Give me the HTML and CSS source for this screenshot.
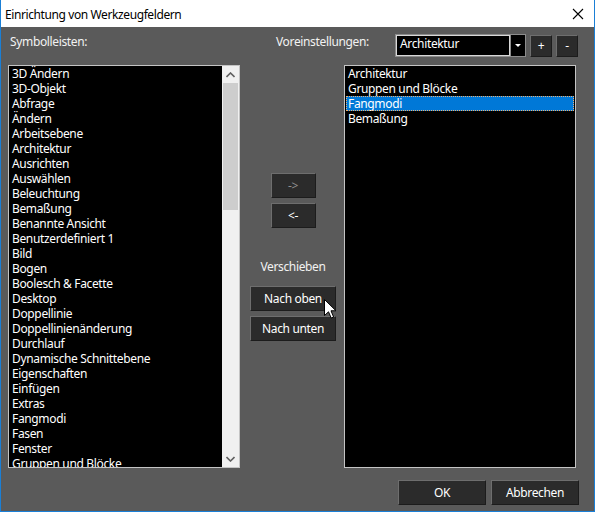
FILE: index.html
```html
<!DOCTYPE html>
<html lang="de">
<head>
<meta charset="utf-8">
<title>Einrichtung von Werkzeugfeldern</title>
<link rel="stylesheet" href="styles.css">
</head>
<body>
<div class="window">
  <div class="titlebar">
    <span class="title">Einrichtung von Werkzeugfeldern</span>
    <svg class="close" width="12" height="12" viewBox="0 0 12 12"><path d="M1 1 L11 11 M11 1 L1 11" stroke="#000" stroke-width="1.1" fill="none"/></svg>
  </div>
  <div class="content">
    <div class="header">
      <span class="label label-left">Symbolleisten:</span>
      <span class="label label-right">Voreinstellungen:</span>
      <div class="combo">
        <div class="combo-text">Architektur</div>
        <div class="combo-btn"><span class="tri"></span></div>
      </div>
      <button class="btn btn-small">+</button>
      <button class="btn btn-small">-</button>
    </div>
    <div class="main">
      <div class="list list-left">
        <div class="items">
          <div class="row">3D Ändern</div>
          <div class="row">3D-Objekt</div>
          <div class="row">Abfrage</div>
          <div class="row">Ändern</div>
          <div class="row">Arbeitsebene</div>
          <div class="row">Architektur</div>
          <div class="row">Ausrichten</div>
          <div class="row">Auswählen</div>
          <div class="row">Beleuchtung</div>
          <div class="row">Bemaßung</div>
          <div class="row">Benannte Ansicht</div>
          <div class="row">Benutzerdefiniert 1</div>
          <div class="row">Bild</div>
          <div class="row">Bogen</div>
          <div class="row">Boolesch &amp; Facette</div>
          <div class="row">Desktop</div>
          <div class="row">Doppellinie</div>
          <div class="row">Doppellinienänderung</div>
          <div class="row">Durchlauf</div>
          <div class="row">Dynamische Schnittebene</div>
          <div class="row">Eigenschaften</div>
          <div class="row">Einfügen</div>
          <div class="row">Extras</div>
          <div class="row">Fangmodi</div>
          <div class="row">Fasen</div>
          <div class="row">Fenster</div>
          <div class="row">Gruppen und Blöcke</div>
        </div>
        <div class="scrollbar">
          <div class="sb-arrow">
            <svg width="9" height="6" viewBox="0 0 9 6"><path d="M0.5 5 L4.5 1 L8.5 5" stroke="#606060" stroke-width="1.6" fill="none"/></svg>
          </div>
          <div class="sb-thumb"></div>
          <div class="sb-track"></div>
          <div class="sb-arrow">
            <svg width="9" height="6" viewBox="0 0 9 6"><path d="M0.5 1 L4.5 5 L8.5 1" stroke="#606060" stroke-width="1.6" fill="none"/></svg>
          </div>
        </div>
      </div>
      <div class="middle">
        <button class="btn btn-arrow btn-disabled">-&gt;</button>
        <button class="btn btn-arrow btn-second">&lt;-</button>
        <div class="move-label">Verschieben</div>
        <button class="btn btn-move">Nach oben</button>
        <button class="btn btn-move btn-second">Nach unten</button>
      </div>
      <div class="list list-right">
        <div class="items items-right">
          <div class="row">Architektur</div>
          <div class="row">Gruppen und Blöcke</div>
          <div class="row row-selected">Fangmodi</div>
          <div class="row">Bemaßung</div>
        </div>
      </div>
    </div>
    <div class="footer">
      <button class="btn btn-footer">OK</button>
      <button class="btn btn-footer">Abbrechen</button>
    </div>
  </div>
  <svg class="cursor" width="13" height="20" viewBox="0 0 13 20"><path d="M0.5 0.5 L0.5 16.5 L4.5 12.8 L7.2 19 L9.6 18 L7 11.8 L12 11.8 Z" fill="#fff" stroke="#000" stroke-width="1"/></svg>
</div>
</body>
</html>
```

FILE: styles.css
```css
* { box-sizing: border-box; }

html, body {
  margin: 0;
  padding: 0;
  background: #5a5a5a;
}

body {
  font-family: "Noto Sans", "DejaVu Sans", sans-serif;
  font-size: 12px;
  letter-spacing: -0.35px;
  color: #ffffff;
}

.window {
  position: relative;
  width: 595px;
  height: 512px;
  background: #5a5a5a;
  border-left: 1px solid #1a7fd6;
  border-right: 1px solid #1a7fd6;
  border-bottom: 1px solid #1a7fd6;
  overflow: hidden;
}

.titlebar {
  height: 27px;
  background: #ffffff;
  display: flex;
  align-items: center;
  justify-content: space-between;
  padding: 0 10px 0 4px;
}

.title {
  color: #000000;
  font-size: 12px;
  letter-spacing: -0.4px;
  line-height: 15px;
  padding-top: 1px;
}

.close {
  display: block;
  margin-top: 1px;
}

.content {
  padding: 7px 16px 6px 7px;
}

.header {
  display: flex;
  height: 23px;
  align-items: flex-start;
}

.label {
  line-height: 15px;
  color: #f2f2f2;
}

.label-left {
  width: 268px;
  padding-left: 2px;
}

.label-right {
  width: 119px;
}

.combo {
  display: flex;
  width: 131px;
  height: 23px;
  border: 1px solid #8c8c8c;
  background: #000000;
}

.combo-text {
  flex: 1;
  border: 1px solid #d8d8d8;
  padding-left: 3px;
  line-height: 15px;
  color: #ffffff;
}

.combo-btn {
  width: 15px;
  border-left: 1px solid #8c8c8c;
  display: flex;
  align-items: center;
  justify-content: center;
}

.tri {
  width: 0;
  height: 0;
  border-left: 3px solid transparent;
  border-right: 3px solid transparent;
  border-top: 3px solid #ffffff;
  margin-top: -1px;
}

.btn {
  font-family: inherit;
  font-size: 12px;
  letter-spacing: -0.35px;
  color: #ffffff;
  background: #2b2b2b;
  border: 1px solid;
  border-color: #6e6e6e #1c1c1c #1c1c1c #6e6e6e;
  padding: 0;
  margin: 0;
  height: 25px;
  line-height: 23px;
  text-align: center;
}

.btn-small {
  width: 22px;
  height: 22px;
  line-height: 20px;
  margin-left: 4px;
  margin-top: 1px;
}

.main {
  display: flex;
  margin-top: 8px;
  height: 403px;
}

.list {
  width: 232px;
  height: 403px;
  border: 1px solid #c4c4c4;
  background: #000000;
  display: flex;
}

.items {
  flex: 1;
  overflow: hidden;
  padding-left: 3px;
}

.items-right {
  padding: 0 1px;
}

.row {
  height: 15px;
  line-height: 15px;
  white-space: nowrap;
  color: #ffffff;
}

.items-right .row {
  padding-left: 2px;
}

.row-selected {
  background: #0078d7;
  outline: 1px dotted #f0b070;
  outline-offset: -1px;
}

.scrollbar {
  width: 17px;
  background: #f0f0f0;
  display: flex;
  flex-direction: column;
}

.sb-arrow {
  height: 17px;
  display: flex;
  align-items: center;
  justify-content: center;
}

.sb-thumb {
  height: 127px;
  margin: 0 1px;
  background: #cdcdcd;
}

.sb-track {
  flex: 1;
}

.middle {
  width: 104px;
  display: flex;
  flex-direction: column;
  align-items: center;
  padding-left: 2px;
}

.btn-arrow {
  width: 45px;
  margin-top: 108px;
}

.btn-arrow.btn-second {
  margin-top: 5px;
}

.btn-disabled {
  color: #8f8f8f;
}

.move-label {
  margin-top: 31px;
  line-height: 15px;
  color: #f2f2f2;
}

.btn-move {
  width: 86px;
  margin-top: 12px;
}

.btn-move.btn-second {
  margin-top: 5px;
}

.footer {
  display: flex;
  justify-content: flex-end;
  gap: 5px;
  margin-top: 12px;
  margin-right: -1px;
}

.btn-footer {
  width: 88px;
}

.cursor {
  position: absolute;
  left: 323px;
  top: 299px;
}
```
